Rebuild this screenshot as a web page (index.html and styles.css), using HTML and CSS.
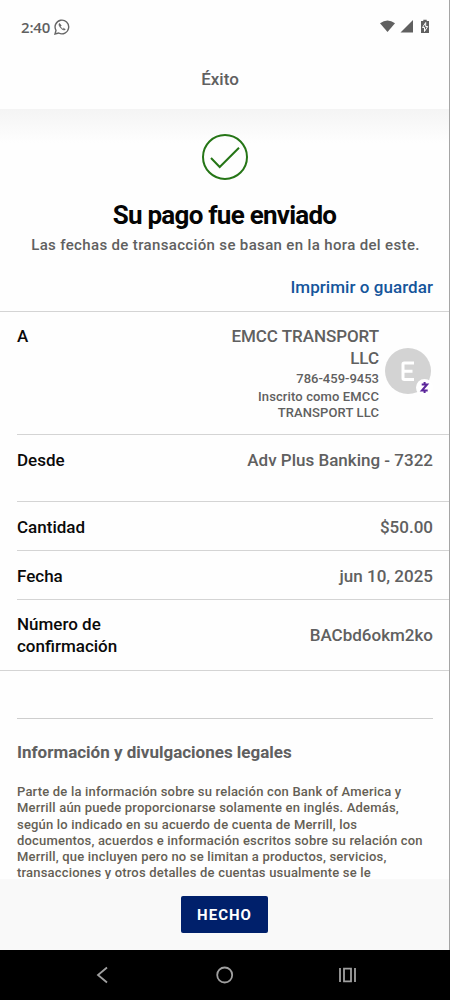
FILE: index.html
```
<!DOCTYPE html>
<html lang="es">
<head>
<meta charset="utf-8">
<title>Éxito</title>
<link rel="stylesheet" href="styles.css">
</head>
<body>
<div class="screen">
  <header class="top">
    <div class="status">
      <div class="status-left">
        <span class="clock">2:40</span>
        <svg class="chat" width="16" height="16" viewBox="0 0 16 16" fill="none" stroke="#666"><path d="M1 15l1-3.6A6.8 6.8 0 1 1 4.700 14z" stroke-width="1.400"/><path d="M5.500 4.300c-1 .8-.8 2.400 1 4.500 2 2.200 3.800 2.800 4.900 1.600l-1.700-1.200-1 .7C7.700 9.400 7 8.700 6.500 7.500l.8-.9z" fill="#666" stroke-width=".5"/></svg>
      </div>
      <svg class="signals" width="50" height="16" viewBox="0 0 50 16"><path d="M0 4.200Q7.500-1.400 15 4.200L7.500 13z" fill="#606060"/><path d="M20.500 13.500H33V1z" fill="#606060"/><path d="M43.300.7h3.400V2H49v12h-8V2h2.300z" fill="#606060"/><path d="M45.700 3.500L42.500 8.500h2v4l3.200-5h-2z" fill="#606060" stroke="#fff" stroke-width="1"/></svg>
    </div>
    <h1 class="page-title">Éxito</h1>
  </header>

  <main class="content">
    <section class="summary">
      <svg class="check" width="48" height="48" viewBox="0 0 48 48" fill="none" stroke="#257516" stroke-width="2"><circle cx="24" cy="24" r="22"/><path d="M10 25l8.700 9L38 14.700"/></svg>
      <h2 class="headline">Su pago fue enviado</h2>
      <p class="note">Las fechas de transacción se basan en la hora del este.</p>
      <a class="print">Imprimir o guardar</a>
    </section>

    <dl class="details">
      <div class="row row-payee">
        <dt>A</dt>
        <dd class="payee">
          <div class="payee-text">
            <div class="name">EMCC TRANSPORT<br>LLC</div>
            <div class="phone">786-459-9453</div>
            <div class="enrolled">Inscrito como EMCC<br>TRANSPORT LLC</div>
          </div>
          <svg class="avatar" width="48" height="50" viewBox="0 0 48 50"><circle cx="23" cy="23" r="23" fill="#d3d3d3"/><path d="M29 15H19.200q-1.200 0-1.200 1.200v14q0 1.200 1.200 1.200H29M18 23.200h9.500" fill="none" stroke="#fff" stroke-width="3"/><circle cx="39.500" cy="39.500" r="8.500" fill="#fff"/><path d="M36.700 36.500h5.400l-5.200 6h5.800M39.600 34v2.500M39.600 42.500V45" fill="none" stroke="#5c279b" stroke-width="2"/></svg>
        </dd>
      </div>
      <div class="row row-from"><dt>Desde</dt><dd class="from">Adv Plus Banking - 7322</dd></div>
      <div class="row"><dt>Cantidad</dt><dd>$50.00</dd></div>
      <div class="row"><dt>Fecha</dt><dd>jun 10, 2025</dd></div>
      <div class="row row-code"><dt>Número de<br>confirmación</dt><dd class="code">BACbd6okm2ko</dd></div>
    </dl>

    <section class="legal">
      <h3>Información y divulgaciones legales</h3>
      <p>Parte de la información sobre su relación con Bank of America y<br>Merrill aún puede proporcionarse solamente en inglés. Además,<br>según lo indicado en su acuerdo de cuenta de Merrill, los<br>documentos, acuerdos e información escritos sobre su relación con<br>Merrill, que incluyen pero no se limitan a productos, servicios,<br>transacciones y otros detalles de cuentas usualmente se le</p>
    </section>
  </main>

  <footer class="actions"><button class="done">HECHO</button></footer>
</div>
<nav class="navbar">
  <svg width="450" height="50" viewBox="0 0 450 50" fill="none" stroke="#a0a0a0" stroke-width="1.800"><path d="M107 17.500l-9 7.500 9 7.500"/><circle cx="224.700" cy="25" r="7.500"/><path d="M340 18v14M355 18v14M344 18.700h7v12.600h-7z"/></svg>
</nav>
</body>
</html>
```
FILE: styles.css
```
* { box-sizing: border-box; margin: 0; padding: 0; }
body {
  width: 450px;
  height: 1000px;
  overflow: hidden;
  background: #fefefe;
  color: #606060;
  font-family: Roboto, "Liberation Sans", sans-serif;
  font-weight: 500;
}
.screen {
  display: flex;
  flex-direction: column;
  height: 950px;
  border-right: 1px solid #a5a5a5;
}
.top { flex: none; height: 109px; background: #fefefe; }
.status {
  display: flex;
  align-items: center;
  justify-content: space-between;
  height: 53px;
  padding: 0 19px 0 21px;
}
.status-left { display: flex; align-items: center; gap: 4px; }
.clock { font: 600 15px/20px "Open Sans", sans-serif; letter-spacing: -0.2px; }
.chat { margin-left: -0.5px; }
.page-title {
  text-align: center;
  font-size: 17px;
  font-weight: 500;
  line-height: 52px;
  padding-right: 9px;
}
.content {
  flex: 1;
  min-height: 0;
  overflow: hidden;
  background: linear-gradient(#f4f4f4, #fefefe 34px);
}
.summary {
  display: flex;
  flex-direction: column;
  align-items: center;
  height: 203px;
  padding-top: 24px;
  border-bottom: 1px solid #d4d4d4;
}
.check { flex: none; }
.headline {
  margin-top: 18px;
  color: #050505;
  font-size: 26px;
  font-weight: 700;
  line-height: 32px;
  letter-spacing: -0.75px;
}
.note { margin: 4px 0 0 2px; font-size: 15px; line-height: 20px; letter-spacing: 0.35px; }
.print {
  align-self: flex-end;
  margin: 21px 16px 0 0;
  color: #15559b;
  font-size: 17px;
  line-height: 22px;
  letter-spacing: 0.05px;
}
.details { border-bottom: 1px solid #d4d4d4; font-size: 17px; line-height: 22px; }
.row {
  display: flex;
  justify-content: space-between;
  min-height: 49px;
  margin-left: 17px;
  padding: 14px 16px 0 0;
}
.row + .row { border-top: 1px solid #d4d4d4; }
.row dt { color: #0a0a0a; }
.row dd { text-align: right; }
.row-payee { height: 122px; padding: 13px 17px 0 0; }
.payee { display: flex; gap: 6px; margin-right: -1px; }
.name { letter-spacing: -0.05px; }
.phone { font-size: 13px; line-height: 20px; }
.enrolled { font-size: 13px; line-height: 16px; letter-spacing: 0.12px; }
.avatar { margin-top: 23px; }
.row-from { height: 67px; }
.row-code { height: 71px; padding-top: 13px; }
.code { padding-top: 11px; }
.legal {
  margin: 47px 16px 0 17px;
  padding-top: 22px;
  border-top: 1px solid #cecece;
}
.legal h3 { font-size: 17px; font-weight: 700; line-height: 22px; }
.legal p {
  margin-top: 21px;
  color: #655f55;
  font-size: 13px;
  line-height: 16.3px;
  letter-spacing: 0.19px;
  white-space: nowrap;
}
.actions {
  flex: none;
  display: flex;
  justify-content: center;
  height: 71px;
  padding-top: 17px;
  background: #f9f9f9;
}
.done {
  width: 87px;
  height: 37px;
  border: 0;
  border-radius: 2px;
  background: #00206b;
  color: #fff;
  font: 700 15px/38px Roboto, sans-serif;
  letter-spacing: 1px;
}
.navbar { height: 50px; background: #000; }
.navbar svg { display: block; }
```
